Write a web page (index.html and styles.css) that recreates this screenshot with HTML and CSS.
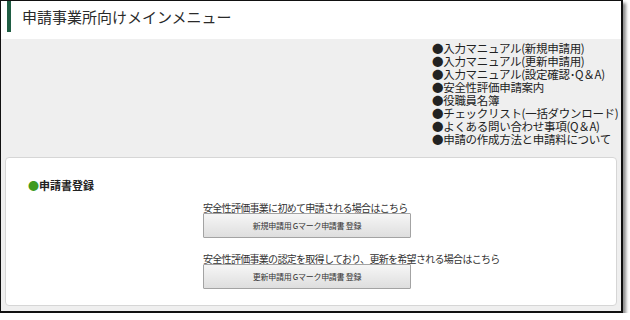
FILE: index.html
```html
<!DOCTYPE html>
<html lang="ja">
<head>
<meta charset="utf-8">
<link rel="stylesheet" href="styles.css">
</head>
<body>
<div class="frame">
  <div class="header">
    <span class="bar"></span>
    <h1 class="title">申請事業所向けメインメニュー</h1>
  </div>
  <div class="main">
    <ul class="links">
      <li>●入力マニュアル(新規申請用)</li>
      <li>●入力マニュアル(更新申請用)</li>
      <li>●入力マニュアル(設定確認･Q＆A)</li>
      <li>●安全性評価申請案内</li>
      <li>●役職員名簿</li>
      <li>●チェックリスト(一括ダウンロード)</li>
      <li>●よくある問い合わせ事項(Q＆A)</li>
      <li>●申請の作成方法と申請料について</li>
    </ul>
    <div class="card">
      <h2 class="card-title"><span class="dot">●</span>申請書登録</h2>
      <div class="entry">
        <p class="note">安全性評価事業に初めて申請される場合はこちら</p>
        <button class="btn">新規申請用 Gマーク申請書 登録</button>
      </div>
      <div class="entry second">
        <p class="note">安全性評価事業の認定を取得しており、更新を希望される場合はこちら</p>
        <button class="btn">更新申請用 Gマーク申請書 登録</button>
      </div>
    </div>
  </div>
</div>
</body>
</html>
```
FILE: styles.css
```css
* { box-sizing: border-box; }
body {
  margin: 0;
  background: #fff;
  font-family: "Noto Sans CJK JP", "Noto Sans", sans-serif;
  color: #222;
}
.frame {
  width: 623px;
  height: 313px;
  border-top: 1px solid #111;
  border-left: 1px solid #111;
  border-right: 2px solid #111;
  border-bottom: 2px solid #111;
  box-shadow: 3px 3px 3px rgba(0,0,0,0.45);
  background: #fff;
  display: flex;
  flex-direction: column;
}
.header {
  height: 38px;
  display: flex;
  align-items: flex-start;
  background: #fff;
}
.bar {
  display: block;
  width: 4px;
  height: 31px;
  margin-left: 6px;
  background: #1f5d43;
}
.title {
  margin: 0 0 0 11px;
  font-size: 15px;
  font-weight: normal;
  line-height: 31px;
  color: #2a2a2a;
  letter-spacing: 0;
}
.main {
  flex: 1;
  background: #efefef;
  padding: 3px 0 0 0;
}
.links {
  list-style: none;
  margin: 0 0 0 431px;
  padding: 0;
  font-size: 11.5px;
  line-height: 13px;
  letter-spacing: -0.3px;
  color: #222;
  height: 104px;
  white-space: nowrap;
}
.links li {
  height: 13px;
}
.card {
  margin: 11px 0 0 4px;
  width: 612px;
  height: 149px;
  background: #fff;
  border: 1px solid #d6d6d6;
  border-radius: 4px;
  padding: 20px 0 0 22px;
}
.card-title {
  margin: 0;
  font-size: 11px;
  font-weight: bold;
  line-height: 14px;
  color: #222;
}
.dot {
  color: #3e9b1f;
}
.entry {
  margin: 10px 0 0 175px;
  width: 300px;
}
.entry.second {
  margin-top: 15px;
}
.note {
  margin: 0;
  font-size: 10px;
  line-height: 11px;
  letter-spacing: -0.7px;
  color: #333;
  white-space: nowrap;
}
.btn {
  display: block;
  margin-top: 0;
  width: 208px;
  height: 25px;
  border: 1px solid #a3a3a3;
  border-radius: 1px;
  background: linear-gradient(#f6f6f6, #dedede);
  font-family: "Noto Sans CJK JP", sans-serif;
  font-size: 8px;
  letter-spacing: -0.3px;
  color: #333;
  padding: 0;
}
```
